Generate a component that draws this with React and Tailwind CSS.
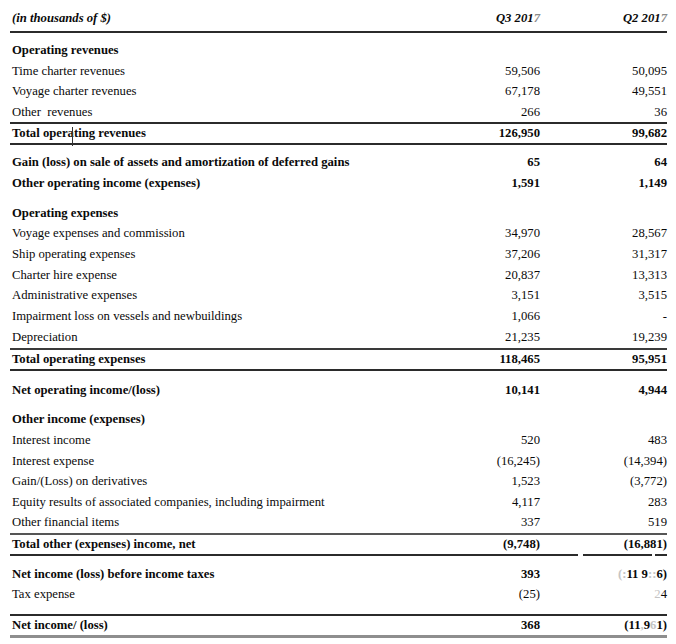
import React from "react";

const lineDark = "h-[2px] bg-[#2b2b2b]";

function Row({ label, q3, q2, bold = false, h = "h-[20px] leading-[20px]", mt = "", children }) {
  return (
    <div className={`relative flex ${h} ${mt} ${bold ? "font-bold" : ""}`}>
      <div className="w-[430px] pl-[2px] whitespace-pre">{label}</div>
      <div className="w-[100px] text-right">{q3}</div>
      <div className="w-[127px] text-right">{q2}</div>
      {children}
    </div>
  );
}

function Faint({ children }) {
  return <span className="text-[#c4c4c4]">{children}</span>;
}

export default function App() {
  const r20 = "h-[20.5px] leading-[20.5px]";
  const r21 = "h-[20.8px] leading-[20.8px]";
  const tot = "h-[19px] leading-[19px]";

  return (
    <div className="w-[676px] h-[644px] bg-white pl-[10px] pr-[9px] text-[12.7px] text-[#0a0a0a] font-['Liberation_Serif','Times_New_Roman',serif]">
      {/* header */}
      <div className="flex h-[31px] pt-[8px] leading-[20px] font-bold italic">
        <div className="w-[430px] pl-[2px]">(in thousands of $)</div>
        <div className="w-[100px] text-right">
          Q3 201<span className="text-[#8a8a8a]">7</span>
        </div>
        <div className="w-[127px] text-right">
          Q2 201<span className="text-[#8a8a8a]">7</span>
        </div>
      </div>
      <div className={lineDark} />

      <Row label="Operating revenues" bold h={r20} mt="mt-[7px]" />
      <Row label="Time charter revenues" q3="59,506" q2="50,095" h={r20} />
      <Row label="Voyage charter revenues" q3="67,178" q2="49,551" h={r20} />
      <Row label="Other  revenues" q3="266" q2="36" h={r20} />
      <div className={lineDark} />
      <Row label="Total operating revenues" q3="126,950" q2="99,682" bold h={tot}>
        <span className="absolute left-[62px] top-[3px] h-[19px] w-px bg-[#333]" />
      </Row>
      <div className={lineDark} />

      <Row label="Gain (loss) on sale of assets and amortization of deferred gains" q3="65" q2="64" bold h="h-[22px] leading-[22px]" mt="mt-[6px]" />
      <Row label="Other operating income (expenses)" q3="1,591" q2="1,149" bold h="h-[21px] leading-[21px]" />

      <Row label="Operating expenses" bold mt="mt-[9px]" />
      <Row label="Voyage expenses and commission" q3="34,970" q2="28,567" h={r21} />
      <Row label="Ship operating expenses" q3="37,206" q2="31,317" h={r21} />
      <Row label="Charter hire expense" q3="20,837" q2="13,313" h={r21} />
      <Row label="Administrative expenses" q3="3,151" q2="3,515" h={r21} />
      <Row label="Impairment loss on vessels and newbuildings" q3="1,066" q2="-" h={r21} />
      <Row label="Depreciation" q3="21,235" q2="19,239" h={r21} />
      <div className="h-[2px] bg-[#3a3a3a]" />
      <Row label="Total operating expenses" q3="118,465" q2="95,951" bold h={tot} />
      <div className={lineDark} />

      <Row label="Net operating income/(loss)" q3="10,141" q2="4,944" bold mt="mt-[9px]" />

      <Row label="Other income (expenses)" bold mt="mt-[9px]" />
      <Row label="Interest income" q3="520" q2="483" h={r20} mt="mt-[1.5px]" />
      <Row label="Interest expense" q3="(16,245)" q2="(14,394)" h={r20} />
      <Row label="Gain/(Loss) on derivatives" q3="1,523" q2="(3,772)" h={r20} />
      <Row label="Equity results of associated companies, including impairment" q3="4,117" q2="283" h={r20} />
      <Row label="Other financial items" q3="337" q2="519" h={r20} />
      <div className="h-[2px] bg-[#555]" />
      <Row label="Total other (expenses) income, net" q3="(9,748)" q2="(16,881)" bold h={tot} />
      <div className="flex h-[2px]">
        <div className="w-[568px] bg-[#2b2b2b]" />
        <div className="ml-[5px] w-[69px] bg-[#2b2b2b]" />
        <div className="ml-[3px] w-[12px] bg-[#2b2b2b]" />
      </div>

      <Row label="Net income (loss) before income taxes" q3="393" q2={<span><Faint>(:</Faint>11 9<Faint>::</Faint>6)</span>} bold mt="mt-[8px]" />
      <Row label="Tax expense" q3="(25)" q2={<span><Faint>2</Faint>4</span>} />
      <div className={`${lineDark} mt-[10px]`} />
      <Row label="Net income/ (loss)" q3="368" q2={<span>(11<Faint>,</Faint>9<Faint>6</Faint>1)</span>} bold h={tot} />
      <div className="h-[3px] bg-[#8e8e8e]" />
    </div>
  );
}
